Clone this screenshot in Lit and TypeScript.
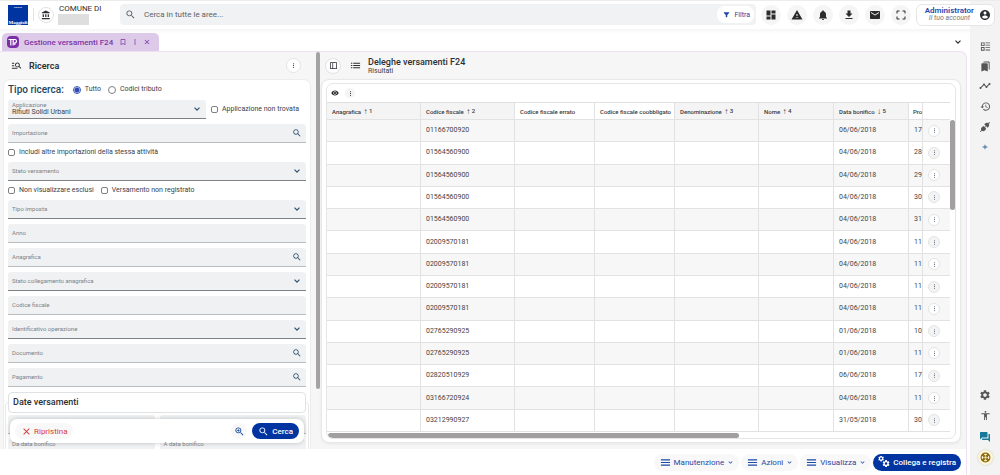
import { LitElement, html, svg, css, nothing } from "lit";
import { customElement, property } from "lit/decorators.js";
import { classMap } from "lit/directives/class-map.js";

const SEARCH =
  "M15.5 14h-.79l-.28-.27C15.41 12.59 16 11.11 16 9.5 16 5.91 13.09 3 9.5 3S3 5.91 3 9.5 5.91 16 9.5 16c1.61 0 3.09-.59 4.23-1.57l.27.28v.79l5 4.99L20.49 19l-4.99-5zm-6 0C7.01 14 5 11.99 5 9.5S7.01 5 9.5 5 14 7.01 14 9.5 11.99 14 9.5 14z";
const GEAR =
  "M19.14 12.94c.04-.3.06-.61.06-.94 0-.32-.02-.64-.07-.94l2.03-1.58c.18-.14.23-.41.12-.61l-1.92-3.32c-.12-.22-.37-.29-.59-.22l-2.39.96c-.5-.38-1.03-.7-1.62-.94l-.36-2.54c-.04-.24-.24-.41-.48-.41h-3.84c-.24 0-.43.17-.47.41l-.36 2.54c-.59.24-1.13.57-1.62.94l-2.39-.96c-.22-.08-.47 0-.59.22L2.74 8.87c-.12.21-.08.47.12.61l2.03 1.58c-.05.3-.09.63-.09.94s.02.64.07.94l-2.03 1.58c-.18.14-.23.41-.12.61l1.92 3.32c.12.22.37.29.59.22l2.39-.96c.5.38 1.03.7 1.62.94l.36 2.54c.05.24.24.41.48.41h3.84c.24 0 .44-.17.47-.41l.36-2.54c.59-.24 1.13-.56 1.62-.94l2.39.96c.22.08.47 0 .59-.22l1.92-3.32c.12-.22.07-.47-.12-.61l-2.01-1.58zM12 15.6c-1.98 0-3.6-1.62-3.6-3.6s1.62-3.6 3.6-3.6 3.6 1.62 3.6 3.6-1.62 3.6-3.6 3.6z";

const PATHS: Record<string, string> = {
  search: SEARCH,
  zoomIn: SEARCH + "M12.5 10.2h-2.3v2.3H8.8v-2.3H6.5V8.8h2.3V6.5h1.4v2.3h2.3z",
  bank: "M4 10v7h3v-7H4zm6 0v7h3v-7h-3zM2 22h19v-3H2v3zm14-12v7h3v-7h-3zm-4.5-9L2 6v2h19V6l-9.5-5z",
  filter: "M3 4h18v2.5l-6.5 7V21h-5v-7.500L3 6.500z",
  dashboard: "M3 13h8V3H3v10zm0 8h8v-6H3v6zm10 0h8V11h-8v10zm0-18v6h8V3h-8z",
  warning: "M1 21h22L12 2 1 21zm12-3h-2v-2h2v2zm0-4h-2v-4h2v4z",
  bell: "M12 22c1.100 0 2-.9 2-2h-4c0 1.100.89 2 2 2zm6-6v-5c0-3.070-1.640-5.640-4.500-6.320V4c0-.83-.67-1.500-1.500-1.500s-1.500.67-1.500 1.500v.68C7.630 5.360 6 7.920 6 11v5l-2 2v1h16v-1l-2-2z",
  download: "M19 9h-4V3H9v6H5l7 7 7-7zM5 18v2h14v-2H5z",
  mail: "M20 4H4c-1.100 0-1.990.9-1.990 2L2 18c0 1.100.9 2 2 2h16c1.100 0 2-.9 2-2V6c0-1.100-.9-2-2-2zm0 4l-8 5-8-5V6l8 5 8-5v2z",
  fullscreen: "M3 5v4h2V5h4V3H5c-1.100 0-2 .9-2 2zm2 10H3v4c0 1.100.9 2 2 2h4v-2H5v-4zm14 4h-4v2h4c1.100 0 2-.9 2-2v-4h-2v4zm0-16h-4v2h4v4h2V5c0-1.100-.9-2-2-2z",
  account: "M12 2C6.480 2 2 6.480 2 12s4.480 10 10 10 10-4.480 10-10S17.520 2 12 2zm0 3c1.660 0 3 1.340 3 3s-1.340 3-3 3-3-1.340-3-3 1.340-3 3-3zm0 14.200c-2.500 0-4.710-1.280-6-3.220.03-1.990 4-3.080 6-3.080 1.990 0 5.970 1.090 6 3.080-1.290 1.940-3.500 3.220-6 3.220z",
  bookmark: "M17 3H7c-1.100 0-1.990.9-1.990 2L5 21l7-3 7 3V5c0-1.100-.9-2-2-2zm0 15l-5-2.180L7 18V5h10v13z",
  more: "M12 8c1.100 0 2-.9 2-2s-.9-2-2-2-2 .9-2 2 .9 2 2 2zm0 2c-1.100 0-2 .9-2 2s.9 2 2 2 2-.9 2-2-.9-2-2-2zm0 6c-1.100 0-2 .9-2 2s.9 2 2 2 2-.9 2-2-.9-2-2-2z",
  close: "M19 6.410L17.590 5 12 10.590 6.410 5 5 6.410 10.590 12 5 17.590 6.410 19 12 13.410 17.590 19 19 17.590 13.410 12z",
  chevron: "M17 7.500L12 12.500 7 7.500 5 9.500l7 7 7-7z",
  manage: "M7 8H2V6h5v2zm0 3.500H2v2h5v-2zm14.200 7.500l-4-4c-.8.52-2.200.83-3.200.83-3 0-5.300-2.300-5.300-5.300s2.300-5.300 5.300-5.300 5.300 2.300 5.300 5.300c0 1-.31 2.200-.83 3L22.600 17.600 21.200 19zM17.300 10.700c0-1.800-1.450-3.300-3.300-3.300s-3.300 1.450-3.300 3.300 1.450 3.300 3.300 3.300 3.300-1.450 3.300-3.300zM2 19h12v-2H2v2z",
  list: "M2 13h3v-2H2v2zm0 5h3v-2H2v2zM2 8h3V6H2v2zm5 5h15v-2H7v2zm0 5h15v-2H7v2zM7 6v2h15V6H7z",
  menu: "M2 19h20v-2.500H2V19zm0-5.700h20v-2.600H2v2.600zM2 5v2.500h20V5H2z",
  panel: "M3 3h18v18H3V3zm2 2v14h4V5H5zm6 0v14h8V5h-8z",
  eye: "M12 4.500C7 4.500 2.730 7.610 1 12c1.730 4.390 6 7.500 11 7.500s9.270-3.110 11-7.500c-1.730-4.390-6-7.500-11-7.500zM12 17c-2.760 0-5-2.240-5-5s2.240-5 5-5 5 2.240 5 5-2.240 5-5 5zm0-8c-1.660 0-3 1.340-3 3s1.340 3 3 3 3-1.340 3-3-1.340-3-3-3z",
  ballot: "M2 3h8v8H2V3zm2 2v4h4V5H4zM2 13h8v8H2v-8zm2 2v4h4v-4H4zM12 3h10v2H12V3zm0 5h10v2H12V8zm0 5.500h10v2H12v-2zm0 5h10v2H12v-2z",
  bookmarks: "M19 18l2 1V3c0-1.100-.9-2-2-2H8.990C7.890 1 7 1.900 7 3h10c1.100 0 2 .9 2 2v13zM15 5H5c-1.100 0-2 .9-2 2v16l7-3 7 3V7c0-1.100-.9-2-2-2z",
  timeline: "M23 8c0 1.100-.9 2-2 2-.18 0-.35-.02-.51-.07l-3.560 3.550c.05.16.07.34.07.52 0 1.100-.9 2-2 2s-2-.9-2-2c0-.18.02-.36.07-.52l-2.550-2.550c-.16.05-.34.07-.52.07s-.36-.02-.52-.07l-4.550 4.560c.05.16.07.33.07.51 0 1.100-.9 2-2 2s-2-.9-2-2 .9-2 2-2c.18 0 .35.02.51.07l4.560-4.550C8.020 9.360 8 9.180 8 9c0-1.100.9-2 2-2s2 .9 2 2c0 .18-.02.36-.07.52l2.550 2.550c.16-.05.34-.07.52-.07s.36.02.52.07l3.550-3.560C19.020 8.350 19 8.180 19 8c0-1.100.9-2 2-2s2 .9 2 2z",
  history: "M13 3c-4.970 0-9 4.030-9 9H1l3.890 3.890.07.14L9 12H6c0-3.870 3.130-7 7-7s7 3.130 7 7-3.130 7-7 7c-1.930 0-3.680-.79-4.940-2.060l-1.420 1.420C8.270 19.990 10.510 21 13 21c4.970 0 9-4.030 9-9s-4.030-9-9-9zm-1 5v5l4.280 2.540.72-1.210-3.500-2.080V8H12z",
  plug: "M22 3.400L20.600 2l-2.500 2.500c-2-1.300-4.200-1-5.800.6L10.600 6.800l6.600 6.600 1.700-1.700c1.600-1.600 1.900-3.800.6-5.800L22 3.400zM13.400 14.600l-1.300-1.300 1.700-1.700-1.400-1.400-1.700 1.700-1.300-1.300L8.600 9.800l-3.300 3.300c-1.600 1.600-1.900 3.800-.6 5.300L2 20.600 3.400 22l2.500-2.500c2 1.300 4.200 1 5.800-.6l2.700-2.700z",
  plus: "M19 13.300h-5.700V19h-2.600v-5.700H5v-2.600h5.700V5h2.600v5.700H19v2.600z",
  gear: GEAR,
  person: "M12 2c1.100 0 2 .9 2 2s-.9 2-2 2-2-.9-2-2 .9-2 2-2zm9 7h-6v13h-2v-6h-2v6H9V9H3V7h18v2z",
  forum: "M21 6h-2v9H6v2c0 .55.45 1 1 1h11l4 4V7c0-.55-.45-1-1-1zm-4 6V3c0-.55-.45-1-1-1H3c-.55 0-1 .45-1 1v14l4-4h10c.55 0 1-.45 1-1z",
};

@customElement("ui-icon")
class UiIcon extends LitElement {
  @property() name = "";
  @property({ type: Number }) size = 10;

  static styles = css`
    :host { display: inline-flex; flex: none; }
    .glyph { display: block; fill: currentColor; }
    .ring { fill: none; stroke: currentColor; }
  `;

  private shape() {
    if (this.name === "gears") {
      return svg`<g transform="translate(-1 -2) scale(.6)"><path d=${GEAR}></path></g>
        <g transform="translate(7.500 6.500) scale(.72)"><path d=${GEAR}></path></g>`;
    }
    if (this.name === "buoy") {
      return svg`<circle class="ring" cx="12" cy="12" r="9.500" stroke-width="2.600"></circle>
        <circle class="ring" cx="12" cy="12" r="3.200" stroke-width="2"></circle>
        <path class="ring" stroke-width="5" d="M5 5l4.500 4.500M19 5l-4.500 4.500M5 19l4.500-4.500M19 19l-4.500-4.500"></path>`;
    }
    return svg`<path fill-rule="evenodd" d=${PATHS[this.name] ?? ""}></path>`;
  }

  render() {
    return html`<svg class="glyph" width=${this.size} height=${this.size} viewBox="0 0 24 24" aria-hidden="true">
      ${this.shape()}
    </svg>`;
  }
}

const controlReset = css`
  * { box-sizing: border-box; }
  button, input, select { font: inherit; color: inherit; margin: 0; }
  button { border: 0; background: none; padding: 0; cursor: pointer; display: inline-flex; align-items: center; justify-content: center; }
`;

@customElement("form-field")
class FormField extends LitElement {
  @property() label = "";
  @property() kind: "text" | "select" | "search" = "text";
  @property() value = "";
  @property({ type: Boolean }) float = false;

  static styles = [
    controlReset,
    css`
      :host { display: block; min-width: 0; }
      .field { display: grid; height: 19px; background: #eff1f2; border-radius: 3px 3px 0 0; border-bottom: 1px solid #b9bbbd; color: #4a5258; }
      .field.dark { border-bottom-color: #7d8184; }
      .caption { grid-area: 1 / 1; align-self: center; padding-left: 4px; font-size: 6px; line-height: 8px; color: #7d8388; pointer-events: none; z-index: 1; }
      .caption.up { align-self: start; padding-top: 1px; }
      .control { grid-area: 1 / 1; width: 100%; height: 18px; min-width: 0; border: 0; outline: 0; background: none; padding: 0 20px 0 4px; appearance: none; font-size: 7px; color: #3a4248; }
      .control.filled { padding-top: 6px; }
      .mark { grid-area: 1 / 1; justify-self: end; align-self: center; margin-right: 4px; color: #2f5577; pointer-events: none; }
      .mark.press { pointer-events: auto; }
    `,
  ];

  render() {
    const filled = this.value !== "";
    const control = { control: true, filled };
    return html`<div class=${classMap({ field: true, dark: this.kind === "select" })}>
      <label for="control" class=${classMap({ caption: true, up: filled || this.float })}>${this.label}</label>
      ${this.kind === "select"
        ? html`<select id="control" class=${classMap(control)}><option>${this.value}</option></select>
            <ui-icon class="mark" name="chevron" size="10"></ui-icon>`
        : html`<input id="control" type="text" class=${classMap(control)} .value=${this.value} />`}
      ${this.kind === "search"
        ? html`<button class="mark press" aria-label="Cerca ${this.label}"><ui-icon name="search" size="10"></ui-icon></button>`
        : nothing}
    </div>`;
  }
}

@customElement("search-panel")
class SearchPanel extends LitElement {
  static styles = [
    controlReset,
    css`
      :host { display: grid; grid-template-rows: 27px minmax(0, 1fr); min-height: 0; min-width: 0; padding: 0 5px 0 3px; position: relative; }
      .title { display: flex; align-items: center; gap: 7px; padding: 0 10px 0 8px; color: #2b2f33; }
      .title h2 { flex: 1; margin: 0; font-size: 9px; line-height: 12px; font-weight: 600; }
      .round { width: 15px; height: 15px; border-radius: 50%; border: 1px solid #e4e4e4; background: #fff; }
      .form { background: #fff; border: 1px solid #ececec; border-bottom: 0; border-radius: 7px 7px 0 0; padding: 4px 4px 0; overflow: hidden; display: flex; flex-direction: column; gap: 5px; }
      .kind { display: flex; align-items: center; height: 11px; border: 0; padding: 0; margin: 0; }
      .kind-label { font-size: 10px; line-height: 11px; font-weight: 500; color: #23475f; margin-right: 9px; }
      .option { display: inline-flex; align-items: center; font-size: 7px; line-height: 9px; color: #3c4247; gap: 4px; white-space: nowrap; }
      .option + .option { margin-left: 7px; }
      .tick { appearance: none; flex: none; width: 7px; height: 7px; border: 1px solid #7d8083; background: #fff; border-radius: 2px; }
      .tick.dot { width: 8px; height: 8px; border-radius: 50%; }
      .tick.dot:checked { border-color: #3455b8; background: radial-gradient(circle, #3048b0 0 2px, #fff 3px); }
      .pair { display: grid; grid-template-columns: minmax(0, 1fr) max-content; align-items: center; gap: 5px; padding-right: 7px; }
      .checks { display: flex; height: 9px; align-items: center; }
      .dates { margin: 10px -3px 0; border: 1px solid #e6e8ea; border-radius: 4px; padding: 0 2px; }
      .dates h3 { margin: -11px 0 0; background: #fff; border: 1px solid #dfe2e4; border-radius: 4px; height: 21px; padding: 0 4px; font-size: 9px; line-height: 19px; font-weight: 500; color: #2a2e32; position: relative; }
      .grid { display: grid; grid-template-columns: 1fr 1fr; gap: 5px; padding: 2px 0 8px; }
      .actions { position: absolute; left: 10px; right: 12px; bottom: 6px; height: 24px; padding: 0 5px; display: flex; align-items: center; gap: 5px; background: #fff; border-radius: 7px; box-shadow: 0 0 4px rgba(0, 0, 0, 0.22); }
      .reset { height: 16px; padding: 0 6px; border-radius: 8px; gap: 2px; background: #f8f8f8; color: #d63b40; font-size: 8px; }
      .spacer { flex: 1; }
      .advanced { width: 16px; height: 16px; border-radius: 50%; background: #f8f8f8; color: #1d4a9e; }
      .go { height: 16px; padding: 0 6px; border-radius: 8px; gap: 3px; background: #0034a0; color: #fff; font-size: 8px; font-weight: 500; }
    `,
  ];

  private check(text: string) {
    return html`<label class="option"><input class="tick" type="checkbox" />${text}</label>`;
  }

  render() {
    return html`
      <div class="title">
        <ui-icon name="manage" size="11"></ui-icon>
        <h2>Ricerca</h2>
        <button class="round" aria-label="Altre opzioni"><ui-icon name="more" size="7"></ui-icon></button>
      </div>
      <div class="form">
        <div class="kind" role="radiogroup" aria-labelledby="kind">
          <span id="kind" class="kind-label">Tipo ricerca:</span>
          <label class="option"><input class="tick dot" type="radio" name="kind" checked />Tutto</label>
          <label class="option"><input class="tick dot" type="radio" name="kind" />Codici tributo</label>
        </div>
        <div class="pair">
          <form-field kind="select" label="Applicazione" value="Rifiuti Solidi Urbani"></form-field>
          ${this.check("Applicazione non trovata")}
        </div>
        <form-field kind="search" label="Importazione"></form-field>
        <div class="checks">${this.check("Includi altre importazioni della stessa attività")}</div>
        <form-field kind="select" label="Stato versamento"></form-field>
        <div class="checks">${this.check("Non visualizzare esclusi")}${this.check("Versamento non registrato")}</div>
        <form-field kind="select" label="Tipo imposta"></form-field>
        <form-field label="Anno"></form-field>
        <form-field kind="search" label="Anagrafica"></form-field>
        <form-field kind="select" label="Stato collegamento anagrafica"></form-field>
        <form-field label="Codice fiscale"></form-field>
        <form-field kind="select" label="Identificativo operazione"></form-field>
        <form-field kind="search" label="Documento"></form-field>
        <form-field kind="search" label="Pagamento"></form-field>
        <section class="dates">
          <h3>Date versamenti</h3>
          <div class="grid">
            <form-field></form-field>
            <form-field></form-field>
            <form-field label="Da data bonifico" float></form-field>
            <form-field label="A data bonifico" float></form-field>
          </div>
        </section>
      </div>
      <div class="actions">
        <button class="reset"><ui-icon name="close" size="11"></ui-icon>Ripristina</button>
        <span class="spacer"></span>
        <button class="advanced" aria-label="Ricerca avanzata"><ui-icon name="zoomIn" size="11"></ui-icon></button>
        <button class="go"><ui-icon name="search" size="11"></ui-icon>Cerca</button>
      </div>
    `;
  }
}

interface Column { text: string; cls: string; sort?: string; order?: number }
const COLUMNS: Column[] = [
  { text: "Anagrafica", cls: "wide", sort: "↑", order: 1 },
  { text: "Codice fiscale", cls: "wide", sort: "↑", order: 2 },
  { text: "Codice fiscale errato", cls: "mid" },
  { text: "Codice fiscale coobbligato", cls: "mid" },
  { text: "Denominazione", cls: "name", sort: "↑", order: 3 },
  { text: "Nome", cls: "small", sort: "↑", order: 4 },
  { text: "Data bonifico", cls: "small", sort: "↓", order: 5 },
  { text: "Pro", cls: "rest" },
];

const ROWS: [string, string, string][] = [
  ["01166700920", "06/06/2018", "176"],
  ["01564560900", "04/06/2018", "28"],
  ["01564560900", "04/06/2018", "29"],
  ["01564560900", "04/06/2018", "30"],
  ["01564560900", "04/06/2018", "31"],
  ["02009570181", "04/06/2018", "112"],
  ["02009570181", "04/06/2018", "112"],
  ["02009570181", "04/06/2018", "114"],
  ["02009570181", "04/06/2018", "118"],
  ["02765290925", "01/06/2018", "10"],
  ["02765290925", "01/06/2018", "11"],
  ["02820510929", "06/06/2018", "176"],
  ["03166720924", "04/06/2018", "116"],
  ["03212990927", "31/05/2018", "30"],
];

@customElement("results-panel")
class ResultsPanel extends LitElement {
  static styles = [
    controlReset,
    css`
      :host { display: grid; grid-template-rows: 27px minmax(0, 1fr); min-width: 0; min-height: 0; padding: 0 5px 6px 0; }
      .title { display: flex; align-items: center; padding: 0 4px; color: #2b2f33; }
      .round { width: 16px; height: 16px; border-radius: 50%; border: 1px solid #e2e2e2; background: #fff; margin-right: 9px; }
      .heading { margin: 0 0 0 7px; }
      .heading h2 { margin: 0; font-size: 9px; line-height: 10px; font-weight: 500; }
      .heading p { margin: 0; font-size: 7px; line-height: 8px; color: #3d4247; }
      .sheet { background: #fff; border: 1px solid #e8e8e8; border-radius: 8px; padding: 3px 4px; min-height: 0; display: grid; box-shadow: 0 1px 3px rgba(0, 0, 0, 0.06); }
      .card { border: 1px solid #e6e6e6; border-radius: 7px; overflow: hidden; display: grid; grid-template: 18px minmax(0, 1fr) 6px / minmax(0, 1fr) 5px; min-height: 0; }
      .tools { grid-column: 1 / -1; display: flex; align-items: center; padding: 0 3px; gap: 5px; color: #222; }
      .tools button { width: 10px; height: 10px; border-radius: 50%; }
      .tools .soft { background: #f4f4f4; }
      table { width: 100%; height: 100%; border-collapse: separate; border-spacing: 0; table-layout: fixed; border-top: 1px solid #e0e0e0; }
      .wide { width: 94px; }
      .mid { width: 80px; }
      .name { width: 84px; }
      .small { width: 75px; }
      .act { width: 27px; }
      th, td { padding: 0 0 0 5px; text-align: left; white-space: nowrap; overflow: hidden; border-right: 1px solid #e2e2e2; border-bottom: 1px solid #e2e2e2; font-size: 7px; line-height: 9px; color: #3f4448; }
      th { height: 17px; font-size: 6px; font-weight: 500; color: #34393d; }
      th.sorted { background: #f4f4f4; }
      th.rest { padding-left: 4px; }
      tr:nth-child(odd) td { background: #f7f7f7; }
      th:last-child, td:last-child { border-right: 0; }
      .arrow { margin-left: 1px; font-size: 8px; line-height: 8px; font-weight: 400; }
      .order { font-size: 6px; line-height: 8px; vertical-align: 1px; }
      .row-menu { width: 12px; height: 12px; border-radius: 50%; border: 1px solid #e4e4e4; background: #fff; color: #54657a; vertical-align: middle; }
      tr:nth-child(even) .row-menu { background: #f4f4f4; }
      .rail-v { padding-top: 18px; }
      .thumb-v { width: 5px; height: 29%; border-radius: 3px; background: #a19f9f; }
      .rail-h { padding: 1px 0 0 1px; }
      .thumb-h { width: 66%; height: 5px; border-radius: 3px; background: #a19f9f; }
    `,
  ];

  render() {
    return html`
      <div class="title">
        <button class="round" aria-label="Mostra pannello"><ui-icon name="panel" size="9"></ui-icon></button>
        <ui-icon name="list" size="11"></ui-icon>
        <div class="heading">
          <h2>Deleghe versamenti F24</h2>
          <p>Risultati</p>
        </div>
      </div>
      <div class="sheet">
        <div class="card">
          <div class="tools">
            <button aria-label="Visualizza colonne"><ui-icon name="eye" size="8"></ui-icon></button>
            <button class="soft" aria-label="Altre azioni"><ui-icon name="more" size="7"></ui-icon></button>
          </div>
          <table>
            <thead>
              <tr>
                ${COLUMNS.map(
                  (c) => html`<th class=${classMap({ [c.cls]: true, sorted: !!c.sort })}>
                    ${c.text}${c.sort
                      ? html` <span class="arrow">${c.sort}</span><span class="order"> ${c.order}</span>`
                      : nothing}
                  </th>`
                )}
                <th class="act"></th>
              </tr>
            </thead>
            <tbody>
              ${ROWS.map(
                ([code, date, protocol]) => html`<tr>
                  <td></td>
                  <td>${code}</td>
                  <td></td>
                  <td></td>
                  <td></td>
                  <td></td>
                  <td>${date}</td>
                  <td>${protocol}</td>
                  <td><button class="row-menu" aria-label="Azioni riga"><ui-icon name="more" size="7"></ui-icon></button></td>
                </tr>`
              )}
            </tbody>
          </table>
          <div class="rail-v"><div class="thumb-v"></div></div>
          <div class="rail-h"><div class="thumb-h"></div></div>
        </div>
      </div>
    `;
  }
}

const HEADER_TOOLS: [string, string][] = [
  ["dashboard", "Cruscotto"],
  ["warning", "Avvisi"],
  ["bell", "Notifiche"],
  ["download", "Scarica"],
  ["mail", "Messaggi"],
  ["fullscreen", "Schermo intero"],
];

@customElement("app-root")
class AppRoot extends LitElement {
  static styles = [
    controlReset,
    css`
      :host { display: block; font-family: Roboto, "Liberation Sans", sans-serif; color: #2b2f33; }
      .shell { display: grid; grid-template-columns: minmax(0, 1fr) 30px; grid-template-rows: 29px 22px minmax(0, 1fr) 26px; height: 100vh; background: #fff; overflow: hidden; }
      .side { grid-column: 2; grid-row: 1 / -1; background: #f3f3f3; display: flex; flex-direction: column; align-items: center; padding: 36px 0 7px; color: #555; }
      .side button { width: 20px; height: 20px; flex: none; }
      .side .low { height: 21px; }
      .side .add { color: #31659c; }
      .side .chat { color: #16799a; }
      .side .help { width: 15px; height: 15px; margin: 3px 0; border-radius: 50%; background: #fff6d8; color: #8a6a10; box-shadow: 0 0 2px rgba(0, 0, 0, 0.2); }
      .spacer { flex: 1; }
      header { grid-column: 1 / -1; grid-row: 1; display: flex; align-items: center; padding: 0 5px 1px 8px; border-top: 1px solid #ececec; background: linear-gradient(to left, transparent 30px, #fff 30px); z-index: 1; }
      .logo { width: 20px; height: 20px; background: #0034a0; color: #fff; text-align: center; font-family: "Liberation Serif", serif; font-weight: 700; font-size: 5px; line-height: 5px; display: flex; flex-direction: column; justify-content: space-between; overflow: hidden; }
      .logo small { font: 500 2px/4px Roboto, sans-serif; }
      .divider { width: 1px; height: 13px; background: #e4e4e4; margin: 0 4px 0 5px; }
      .entity { width: 16px; height: 16px; border: 1px solid #e2e2e2; border-radius: 50%; }
      .town { margin: 0 18px 0 5px; font-size: 8px; line-height: 10px; width: 43px; white-space: nowrap; }
      .mask { display: block; width: 31px; height: 11px; margin-left: -1px; background: #dedede; }
      .search { flex: 1; height: 21px; display: flex; align-items: center; gap: 8px; padding: 0 2px 0 5px; background: #f1f2f3; border-radius: 4px; color: #555b60; min-width: 0; }
      .search input { flex: 1; min-width: 0; border: 0; outline: 0; background: none; padding: 0; font-size: 8px; }
      .search input::placeholder { color: #5c6267; opacity: 1; }
      .filter { height: 17px; padding: 0 4px 0 6px; gap: 4px; border-radius: 8px; background: #fff; color: #1d46a8; font-size: 7px; }
      .tools { display: flex; gap: 6px; margin: 0 5px; }
      .tools button { width: 20px; height: 20px; border-radius: 50%; background: #f5f5f5; color: #2c2c2c; }
      .user { height: 22px; width: 79px; border: 1px solid #e6e6e6; border-radius: 6px; background: #fff; justify-content: flex-end; gap: 5px; padding-right: 3px; }
      .user-text { text-align: right; }
      .user-name { display: block; font-size: 8px; line-height: 8px; font-weight: 600; color: #1f4bab; }
      .user-sub { display: block; font-size: 7px; line-height: 7px; font-style: italic; color: #777; padding-right: 4px; }
      .tabs { grid-column: 1; grid-row: 2; display: flex; align-items: flex-end; padding: 0 6px 0 2px; background: linear-gradient(#f6f6f6, #fff 5px); }
      .tab { height: 18px; display: flex; align-items: center; padding: 0 8px 0 5px; border-radius: 5px 5px 0 0; background: #dccae8; color: #7b35a5; font-size: 8px; font-weight: 500; }
      .tab-badge { width: 12px; height: 12px; border-radius: 4px; background: #7c2ea6; color: #fff; display: grid; place-items: center; margin-right: 5px; }
      .tab-actions { display: flex; gap: 4px; margin-left: 6px; }
      .collapse { margin-left: auto; width: 12px; height: 18px; }
      .work { grid-column: 1; grid-row: 3; margin-right: 3px; background: #f6f6f6; border: 0 solid #efdff5; border-width: 1px 1px 0 0; border-top-right-radius: 7px; display: grid; grid-template-columns: minmax(0, 316fr) 5px minmax(0, 645fr); min-height: 0; }
      .thumb { width: 4px; height: 85%; border-radius: 2px; background: #a5a2a3; }
      footer { grid-column: 1; grid-row: 4; margin-right: 3px; display: flex; align-items: center; justify-content: flex-end; gap: 2px; padding-right: 5px; background: #fff; border-right: 1px solid #efdff5; }
      footer button { height: 17px; padding: 0 5px 0 6px; border-radius: 9px; background: #f8f8f8; gap: 3px; font-size: 8px; color: #1d4aa6; }
      footer .primary { background: #0034a0; color: #fff; font-weight: 500; padding: 0 5px; }
    `,
  ];

  render() {
    return html`<div class="shell">
      <nav class="side" aria-label="Strumenti">
        <button aria-label="Elenco"><ui-icon name="ballot" size="11"></ui-icon></button>
        <button aria-label="Segnalibri"><ui-icon name="bookmarks" size="11"></ui-icon></button>
        <button aria-label="Andamento"><ui-icon name="timeline" size="12"></ui-icon></button>
        <button class="low" aria-label="Cronologia"><ui-icon name="history" size="11"></ui-icon></button>
        <button aria-label="Connessioni"><ui-icon name="plug" size="12"></ui-icon></button>
        <button class="add" aria-label="Aggiungi"><ui-icon name="plus" size="8"></ui-icon></button>
        <span class="spacer"></span>
        <button class="low" aria-label="Impostazioni"><ui-icon name="gear" size="12"></ui-icon></button>
        <button class="low" aria-label="Accessibilità"><ui-icon name="person" size="11"></ui-icon></button>
        <button class="low chat" aria-label="Chat"><ui-icon name="forum" size="12"></ui-icon></button>
        <button class="help" aria-label="Assistenza"><ui-icon name="buoy" size="11"></ui-icon></button>
      </nav>
      <header>
        <div class="logo"><small>GRUPPO</small><span>Maggioli</span></div>
        <span class="divider"></span>
        <button class="entity" aria-label="Ente"><ui-icon name="bank" size="10"></ui-icon></button>
        <div class="town">COMUNE DI<span class="mask"></span></div>
        <div class="search">
          <ui-icon name="search" size="11"></ui-icon>
          <input type="search" aria-label="Cerca in tutte le aree" placeholder="Cerca in tutte le aree..." />
          <button class="filter"><ui-icon name="filter" size="7"></ui-icon>Filtra</button>
        </div>
        <div class="tools">
          ${HEADER_TOOLS.map(
            ([icon, label]) => html`<button aria-label=${label}><ui-icon name=${icon} size="12"></ui-icon></button>`
          )}
        </div>
        <button class="user">
          <span class="user-text"><span class="user-name">Administrator</span><span class="user-sub">Il tuo account</span></span>
          <ui-icon name="account" size="12"></ui-icon>
        </button>
      </header>
      <div class="tabs">
        <div class="tab">
          <span class="tab-badge">
            <svg width="10" height="10" viewBox="0 0 10 10" fill="none" stroke="#fff" stroke-width="1.200" aria-hidden="true">
              <path d="M.5 2.500H5M2.800 2.500V8.500M5.200 8.500V2.500H7.200A1.700 1.700 0 0 1 7.200 5.800H6.800V8"></path>
            </svg>
          </span>
          Gestione versamenti F24
          <span class="tab-actions">
            <button aria-label="Salva scheda"><ui-icon name="bookmark" size="8"></ui-icon></button>
            <button aria-label="Opzioni scheda"><ui-icon name="more" size="8"></ui-icon></button>
            <button aria-label="Chiudi scheda"><ui-icon name="close" size="8"></ui-icon></button>
          </span>
        </div>
        <button class="collapse" aria-label="Schede aperte"><ui-icon name="chevron" size="10"></ui-icon></button>
      </div>
      <main class="work">
        <search-panel></search-panel>
        <div class="rail"><div class="thumb"></div></div>
        <results-panel></results-panel>
      </main>
      <footer>
        ${["Manutenzione", "Azioni", "Visualizza"].map(
          (text) => html`<button><ui-icon name="menu" size="11"></ui-icon>${text}<ui-icon name="chevron" size="7"></ui-icon></button>`
        )}
        <button class="primary"><ui-icon name="gears" size="12"></ui-icon>Collega e registra</button>
      </footer>
    </div>`;
  }
}
